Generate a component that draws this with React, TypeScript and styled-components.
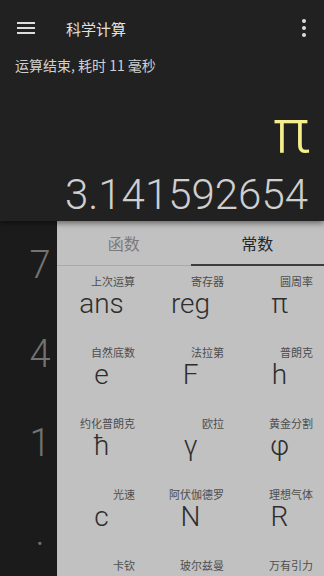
import React from 'react';
import styled, { createGlobalStyle } from 'styled-components';

const GlobalStyle = createGlobalStyle`
  html, body {
    margin: 0;
    padding: 0;
    background: #1b1b1b;
  }
  * {
    box-sizing: border-box;
  }
`;

const Screen = styled.div`
  width: 324px;
  height: 576px;
  overflow: hidden;
  display: flex;
  flex-direction: column;
  background: #1b1b1b;
  font-family: Roboto, "Noto Sans CJK SC", sans-serif;
`;

const Display = styled.div`
  height: 221px;
  flex-shrink: 0;
  background: #212121;
  display: flex;
  flex-direction: column;
  overflow: hidden;
  box-shadow: 0 2px 6px rgba(0, 0, 0, 0.5);
  position: relative;
  z-index: 1;
`;

const Toolbar = styled.div`
  height: 56px;
  flex-shrink: 0;
  display: flex;
  align-items: center;
  padding: 0 10px 0 16px;
`;

const Title = styled.div`
  flex: 1;
  margin-left: 30px;
  color: #e0e0e0;
  font-size: 15px;
  font-family: "Noto Sans CJK SC", sans-serif;
`;

const IconBtn = styled.div`
  display: flex;
  align-items: center;
  justify-content: center;
  width: 20px;
  height: 24px;
`;

const Status = styled.div`
  padding: 0 15px;
  color: #d0d0d0;
  font-size: 14px;
  line-height: 18px;
  font-family: "Noto Sans CJK SC", sans-serif;
`;

const Expr = styled.div`
  margin-top: 35px;
  padding-right: 14px;
  text-align: right;
  color: #f6ee8e;
  font-size: 62px;
  font-weight: 300;
  line-height: 44px;
`;

const Result = styled.div`
  margin-top: 18px;
  padding-right: 16px;
  text-align: right;
  color: #cfcfcf;
  font-size: 42px;
  font-weight: 300;
  line-height: 48px;
`;

const Body = styled.div`
  height: 355px;
  flex-shrink: 0;
  overflow: hidden;
  display: flex;
`;

const KeyColumn = styled.div`
  width: 57px;
  flex-shrink: 0;
  display: flex;
  flex-direction: column;
  background: #1b1b1b;
`;

const Key = styled.div`
  flex: 1;
  display: flex;
  align-items: center;
  justify-content: center;
  padding-left: 23px;
  color: #737373;
  font-size: 38px;
  font-weight: 300;
`;

const Panel = styled.div`
  flex: 1;
  background: #c1c1c1;
  display: flex;
  flex-direction: column;
`;

const Tabs = styled.div`
  height: 45px;
  flex-shrink: 0;
  display: flex;
  border-bottom: 1px solid #a9a9a9;
`;

const Tab = styled.div<{ $active?: boolean }>`
  flex: 1;
  display: flex;
  align-items: center;
  justify-content: center;
  font-family: "Noto Sans CJK SC", sans-serif;
  font-size: 16px;
  color: ${(p) => (p.$active ? '#262626' : '#7a7a7a')};
  border-bottom: 2px solid ${(p) => (p.$active ? '#3c3c3c' : 'transparent')};
  margin-bottom: -1px;
`;

const Grid = styled.div`
  display: grid;
  grid-template-columns: repeat(3, 1fr);
  grid-auto-rows: 71px;
`;

const Cell = styled.div`
  display: flex;
  flex-direction: column;
  padding-top: 8px;
`;

const Label = styled.div`
  text-align: right;
  padding-right: 11px;
  font-family: "Noto Sans CJK SC", sans-serif;
  font-size: 11px;
  line-height: 14px;
  color: #4e4e4e;
`;

const Symbol = styled.div`
  text-align: center;
  font-family: Roboto, sans-serif;
  font-weight: 300;
  font-size: 28px;
  line-height: 32px;
  color: #2e2e2e;
`;

const constants: [string, string][] = [
  ['上次运算', 'ans'],
  ['寄存器', 'reg'],
  ['圆周率', 'π'],
  ['自然底数', 'e'],
  ['法拉第', 'F'],
  ['普朗克', 'h'],
  ['约化普朗克', 'ħ'],
  ['欧拉', 'γ'],
  ['黄金分割', 'φ'],
  ['光速', 'c'],
  ['阿伏伽德罗', 'N'],
  ['理想气体', 'R'],
  ['卡钦', 'K'],
  ['玻尔兹曼', 'k'],
  ['万有引力', 'G'],
];

const MenuIcon = () => (
  <svg width="18" height="14" viewBox="0 0 18 14">
    <rect x="0" y="1" width="18" height="2" fill="#dcdcdc" />
    <rect x="0" y="6" width="18" height="2" fill="#dcdcdc" />
    <rect x="0" y="11" width="18" height="2" fill="#dcdcdc" />
  </svg>
);

const MoreIcon = () => (
  <svg width="4" height="18" viewBox="0 0 4 18">
    <circle cx="2" cy="2" r="2" fill="#dcdcdc" />
    <circle cx="2" cy="9" r="2" fill="#dcdcdc" />
    <circle cx="2" cy="16" r="2" fill="#dcdcdc" />
  </svg>
);

const App: React.FC = () => {
  return (
    <>
      <GlobalStyle />
      <Screen>
        <Display>
          <Toolbar>
            <IconBtn>
              <MenuIcon />
            </IconBtn>
            <Title>科学计算</Title>
            <IconBtn>
              <MoreIcon />
            </IconBtn>
          </Toolbar>
          <Status>运算结束, 耗时 11 毫秒</Status>
          <Expr>π</Expr>
          <Result>3.141592654</Result>
        </Display>
        <Body>
          <KeyColumn>
            <Key>7</Key>
            <Key>4</Key>
            <Key>1</Key>
            <Key>.</Key>
          </KeyColumn>
          <Panel>
            <Tabs>
              <Tab>函数</Tab>
              <Tab $active>常数</Tab>
            </Tabs>
            <Grid>
              {constants.map(([label, sym]) => (
                <Cell key={label}>
                  <Label>{label}</Label>
                  <Symbol>{sym}</Symbol>
                </Cell>
              ))}
            </Grid>
          </Panel>
        </Body>
      </Screen>
    </>
  );
};

export default App;
